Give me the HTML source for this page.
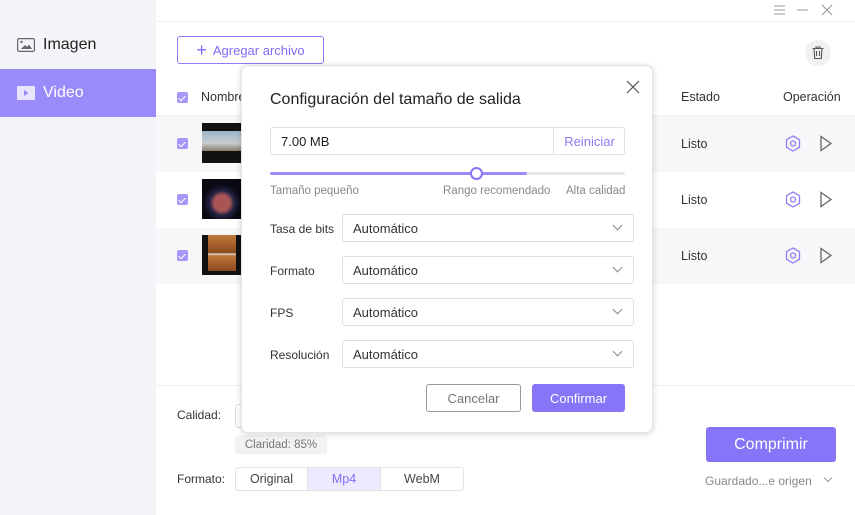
<!DOCTYPE html>
<html><head><meta charset="utf-8"><style>
*{box-sizing:border-box;margin:0;padding:0}
body{width:855px;height:515px;overflow:hidden;font-family:"Liberation Sans","Noto Sans CJK SC",sans-serif;background:#fff;position:relative;color:#333}
.abs{position:absolute}
.side{left:0;top:0;width:156px;height:515px;background:#f4f5f8}
.nav{left:0;width:156px;height:48px;display:flex;align-items:center;padding-left:17px;font-size:16px;color:#222}
.cb{width:11px;height:11px;background:#a797f7;border-radius:2px}
.cb:after{content:"";position:absolute;left:3px;top:1.5px;width:3px;height:6px;border:solid #fff;border-width:0 1.3px 1.3px 0;transform:rotate(45deg)}
.row{left:156px;width:699px;height:56px}
.thumb{width:40px;height:40px;background:#111}
.sel{height:28px;border:1px solid #dedede;border-radius:3px;display:flex;align-items:center;padding-left:10px;font-size:13px;color:#333}
.lbl{font-size:12.5px;color:#333}
.chev{position:absolute;right:12px;top:7px;width:7px;height:7px;border:solid #888;border-width:0 1px 1px 0;transform:rotate(45deg)}
</style></head><body>
<div class="abs side"></div>
<div class="abs nav" style="top:21px"><svg width="18" height="14" style="margin-right:8px"><rect x="0.6" y="0.6" width="16.8" height="12.8" rx="1.5" fill="none" stroke="#666" stroke-width="1.2"/><circle cx="4.5" cy="4" r="1.2" fill="#666"/><path d="M4 11 L8 7 L10 9 L12 6.5 L15 11Z" fill="#666"/></svg>Imagen</div>
<div class="abs nav" style="top:69px;background:#9a8bfb;color:#fff"><svg width="18" height="14" style="margin-right:8px"><rect x="0" y="0" width="18" height="14" rx="1.5" fill="#e9e5ff"/><path d="M7 4 L11.5 7 L7 10Z" fill="#9a8bfb"/></svg>Video</div>
<div class="abs" style="left:156px;top:21px;width:699px;height:1px;background:#eee"></div>
<div class="abs" style="left:772px;top:4px;font-size:13px;color:#999;letter-spacing:0">
<svg width="70" height="12"><path d="M2 2h11M2 6h11M2 10h11M25 6h11M50 1l10 10M60 1l-10 10" stroke="#999" stroke-width="1.1"/></svg></div>
<div class="abs" style="left:177px;top:36px;width:147px;height:28px;border:1px solid #8b7bf5;border-radius:3px;color:#7f6ef5;font-size:13px;display:flex;align-items:center;justify-content:center"><span style="font-size:18px;margin-right:6px;line-height:1">+</span>Agregar archivo</div>
<div class="abs" style="left:805px;top:40px;width:26px;height:26px;border-radius:50%;background:#f1f1f4"><svg width="26" height="26"><path d="M7.5 8.5h11M11 8.5V7h4v1.5M9 8.5l.7 10h6.6l.7-10M11.5 11v5M14.5 11v5" stroke="#555" stroke-width="1.1" fill="none"/></svg></div>
<div class="abs cb" style="left:177px;top:92px"></div>
<div class="abs lbl" style="left:201px;top:90px">Nombre</div>
<div class="abs lbl" style="left:681px;top:90px">Estado</div>
<div class="abs lbl" style="left:783px;top:90px">Operación</div>
<div class="abs" style="left:156px;top:115px;width:699px;height:1px;background:#eee"></div>
<div class="abs row" style="top:116px;background:#f7f7f9"></div>
<div class="abs row" style="top:228px;background:#f7f7f9"></div>
<div class="abs cb" style="left:177px;top:138px"></div>
<div class="abs cb" style="left:177px;top:194px"></div>
<div class="abs cb" style="left:177px;top:250px"></div>
<div class="abs thumb" style="left:202px;top:123px;background:linear-gradient(#111 0 20%,#9bb4c8 20%,#c9cdd0 50%,#8a7c6e 70%,#111 70%)"></div>
<div class="abs thumb" style="left:202px;top:179px;background:radial-gradient(circle at 50% 60%,#a55 0 25%,#224 40%,#0a0a12 60%)"></div>
<div class="abs thumb" style="left:202px;top:235px;background:linear-gradient(90deg,#111 15%,transparent 15% 85%,#111 85%),linear-gradient(#c07838,#8a4820 45%,#ddd 47%,#c07838 52%,#8a4820 90%,#111 90%)"></div>
<div class="abs lbl" style="left:681px;top:137px">Listo</div>
<div class="abs lbl" style="left:681px;top:193px">Listo</div>
<div class="abs lbl" style="left:681px;top:249px">Listo</div>
<svg class="abs" style="left:784px;top:130px" width="60" height="140">
<g fill="none" stroke-width="1.3">
<g stroke="#8f7ff5"><path d="M9 6l6.5 3.7v7.5L9 21 2.5 17.2V9.7Z"/><circle cx="9" cy="13.5" r="2.5"/></g>
<path d="M37 6.5l10 7-10 7Z" stroke="#666"/>
<g transform="translate(0,56)"><g stroke="#8f7ff5"><path d="M9 6l6.5 3.7v7.5L9 21 2.5 17.2V9.7Z"/><circle cx="9" cy="13.5" r="2.5"/></g><path d="M37 6.5l10 7-10 7Z" stroke="#666"/></g>
<g transform="translate(0,112)"><g stroke="#8f7ff5"><path d="M9 6l6.5 3.7v7.5L9 21 2.5 17.2V9.7Z"/><circle cx="9" cy="13.5" r="2.5"/></g><path d="M37 6.5l10 7-10 7Z" stroke="#666"/></g>
</g></svg>
<div class="abs" style="left:156px;top:385px;width:699px;height:1px;background:#eee"></div>
<div class="abs lbl" style="left:177px;top:408px;font-size:12px">Calidad:</div>
<div class="abs" style="left:235px;top:404px;width:10px;height:24px;border:1px solid #ddd;border-radius:3px"></div>
<div class="abs" style="left:235px;top:435px;width:92px;height:19px;background:#f2f2f5;border-radius:3px;font-size:11.5px;color:#777;display:flex;align-items:center;justify-content:center">Claridad: 85%</div>
<div class="abs lbl" style="left:177px;top:472px;font-size:12px">Formato:</div>
<div class="abs" style="left:235px;top:467px;width:229px;height:24px;border:1px solid #e2e2e2;border-radius:3px;display:flex;font-size:12.5px;color:#444">
<div style="width:71px;display:flex;align-items:center;justify-content:center">Original</div>
<div style="width:74px;display:flex;align-items:center;justify-content:center;background:#eeebfe;color:#7f6ef5;border-left:1px solid #e2e2e2;border-right:1px solid #e2e2e2">Mp4</div>
<div style="flex:1;display:flex;align-items:center;justify-content:center">WebM</div></div>
<div class="abs" style="left:706px;top:427px;width:130px;height:35px;background:#8676f7;border-radius:3px;color:#fff;font-size:16px;display:flex;align-items:center;justify-content:center">Comprimir</div>
<div class="abs" style="left:705px;top:474px;font-size:12px;color:#888">Guardado...e origen</div>
<div class="abs" style="left:825px;top:475px;width:6px;height:6px;border:solid #999;border-width:0 1px 1px 0;transform:rotate(45deg)"></div>

<div class="abs" style="left:241px;top:65px;width:412px;height:368px;background:#fff;border-radius:7px;box-shadow:0 1px 6px rgba(0,0,0,.18);border:1px solid #e4e4e4">
<svg class="abs" style="left:384px;top:14px" width="14" height="14"><path d="M1 1l12 12M13 1L1 13" stroke="#555" stroke-width="1.2"/></svg>
<div class="abs" style="left:28px;top:25px;font-size:16px;color:#222">Configuración del tamaño de salida</div>
<div class="abs" style="left:28px;top:61px;width:355px;height:28px;border:1px solid #e0e0e0;border-radius:3px;font-size:13px;color:#222;display:flex;align-items:center;padding-left:10px">7.00 MB</div>
<div class="abs" style="left:311px;top:61px;width:72px;height:28px;border-left:1px solid #e0e0e0;color:#8b7bf5;font-size:13px;display:flex;align-items:center;justify-content:center">Reiniciar</div>
<div class="abs" style="left:28px;top:106px;width:355px;height:3px;background:#e6e6e6;border-radius:2px"></div>
<div class="abs" style="left:28px;top:106px;width:257px;height:3px;background:#9a8bfb;border-radius:2px"></div>
<div class="abs" style="left:228px;top:101px;width:13px;height:13px;border:2px solid #8676f7;border-radius:50%;background:#fff"></div>
<div class="abs" style="left:28px;top:119px;font-size:11.5px;color:#888">Tamaño pequeño</div>
<div class="abs" style="left:201px;top:119px;font-size:11.5px;color:#888">Rango recomendado</div>
<div class="abs" style="left:324px;top:119px;font-size:11.5px;color:#888">Alta calidad</div>
<div class="abs lbl" style="left:28px;top:156px;font-size:12px">Tasa de bits</div>
<div class="abs sel" style="left:100px;top:148px;width:292px">Automático<i class="chev"></i></div>
<div class="abs lbl" style="left:28px;top:198px;font-size:12px">Formato</div>
<div class="abs sel" style="left:100px;top:190px;width:292px">Automático<i class="chev"></i></div>
<div class="abs lbl" style="left:28px;top:240px;font-size:12px">FPS</div>
<div class="abs sel" style="left:100px;top:232px;width:292px">Automático<i class="chev"></i></div>
<div class="abs lbl" style="left:28px;top:282px;font-size:12px">Resolución</div>
<div class="abs sel" style="left:100px;top:274px;width:292px">Automático<i class="chev"></i></div>
<div class="abs" style="left:184px;top:318px;width:95px;height:28px;border:1px solid #999;border-radius:3px;color:#777;font-size:13px;display:flex;align-items:center;justify-content:center">Cancelar</div>
<div class="abs" style="left:290px;top:318px;width:93px;height:28px;background:#8676f7;border-radius:3px;color:#fff;font-size:13px;display:flex;align-items:center;justify-content:center">Confirmar</div>
</div>
</body></html>
